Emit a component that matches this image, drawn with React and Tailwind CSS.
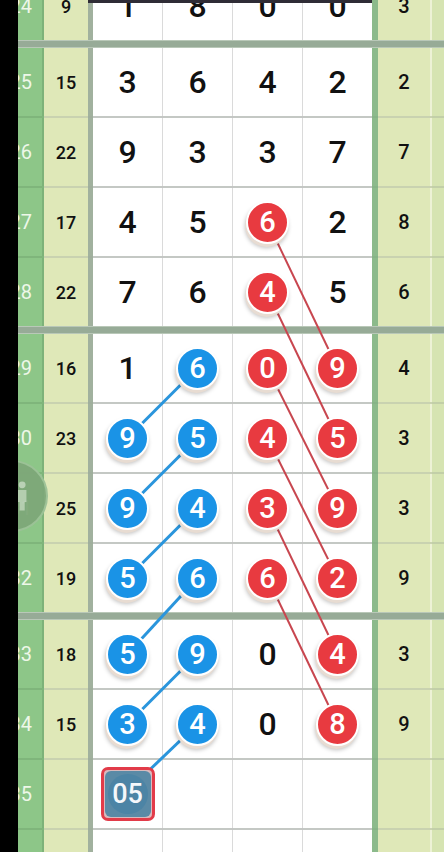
import React from 'react';

const B = (v) => ({ v, c: 'b' });
const R = (v) => ({ v, c: 'r' });

const rows = [
  { n: '24', s: '9', d: ['1', '8', '0', '0'], r: '3', last: true },
  { n: '25', s: '15', d: ['3', '6', '4', '2'], r: '2' },
  { n: '26', s: '22', d: ['9', '3', '3', '7'], r: '7' },
  { n: '27', s: '17', d: ['4', '5', R('6'), '2'], r: '8' },
  { n: '28', s: '22', d: ['7', '6', R('4'), '5'], r: '6', last: true },
  { n: '29', s: '16', d: ['1', B('6'), R('0'), R('9')], r: '4' },
  { n: '30', s: '23', d: [B('9'), B('5'), R('4'), R('5')], r: '3' },
  { n: '31', s: '25', d: [B('9'), B('4'), R('3'), R('9')], r: '3' },
  { n: '32', s: '19', d: [B('5'), B('6'), R('6'), R('2')], r: '9', last: true },
  { n: '33', s: '18', d: [B('5'), B('9'), '0', R('4')], r: '3' },
  { n: '34', s: '15', d: [B('3'), B('4'), '0', R('8')], r: '9' },
  { n: '35', s: '', d: [{ v: '05', c: 'x' }, '', '', ''], r: '' },
  { n: '36', s: '', d: ['', '', '', ''], r: '', last: true },
];

const centers = [];
{
  let y = -28;
  rows.forEach((row) => {
    centers.push(y + 34);
    y += row.last ? 76 : 70;
  });
}
const colX = [127.5, 197.5, 267.5, 337.5];

const redLines = [];
const blueLines = [];
for (let r = 3; r <= 8; r++) redLines.push([colX[2], centers[r], colX[3], centers[r + 2]]);
for (let r = 5; r <= 9; r++) blueLines.push([colX[1], centers[r], colX[0], centers[r + 1]]);

const font = { fontFamily: 'Roboto, "Liberation Sans", sans-serif' };

function Ball({ v, c }) {
  if (c === 'x') {
    return (
      <div className="relative z-10 w-[54px] h-[54px] rounded-[7px] border-[3px] border-[#e23b49] bg-[#d9b9bd] flex items-center justify-center">
        <div className="w-[46px] h-[46px] rounded-[6px] bg-[#5a8aa6] flex items-center justify-center">
          <div className="w-[40px] h-[40px] rounded-full bg-[#4c84a5] flex items-center justify-center text-[#f4f7fa] text-[27px] leading-none">
            {v}
          </div>
        </div>
      </div>
    );
  }
  const bg = c === 'b' ? 'bg-[#1a93e6]' : 'bg-[#e83a40]';
  return (
    <div
      className={`relative z-10 w-[43px] h-[43px] rounded-full ${bg} border-[2.5px] border-white flex items-center justify-center text-white text-[29px] leading-none shadow-[-1px_3px_0_#e8dcd2,-1px_4px_4px_rgba(0,0,0,0.25)]`}
    >
      {v}
    </div>
  );
}

function Row({ row }) {
  const h = row.last ? 'h-[68px]' : 'h-[70px] border-b-2';
  return (
    <>
      <div className="flex">
        <div className={`w-[24px] ${h} border-[#7fb57b] bg-[#8dc688] flex items-center justify-end pr-[10px] overflow-hidden whitespace-nowrap text-[20px] text-[#eef7e8]`}>
          {row.n}
        </div>
        <div className={`w-[2px] ${h} border-[#7fb57b] bg-[#7db279]`} />
        <div className={`w-[44px] ${h} border-[#c9d2b0] bg-[#dfe8b8] flex items-center justify-center text-[18px] font-medium text-[#111]`}>
          {row.s}
        </div>
        <div className={`w-[5px] ${h} border-[#9fae9c] bg-[#a1b19e]`} />
        {row.d.map((cell, i) => (
          <React.Fragment key={i}>
            {i > 0 && <div className={`w-[1px] ${h} border-[#c4c4c4] bg-[#dadada]`} />}
            <div className={`w-[69px] ${h} border-[#c4c8c4] bg-white flex items-center justify-center text-[32px] font-medium text-[#111] leading-none`}>
              {typeof cell === 'string' ? cell : <Ball {...cell} />}
            </div>
          </React.Fragment>
        ))}
        <div className={`w-[6px] ${h} border-[#86b486] bg-[#8cba8b]`} />
        <div className={`w-[52px] ${h} border-[#c9d2b0] bg-[#dfe8b8] flex items-center justify-center text-[20px] font-medium text-[#111]`}>
          {row.r}
        </div>
        <div className={`w-[2px] ${h} border-[#c9d2b0] bg-[#edf2d6]`} />
        <div className={`w-[12px] ${h} border-[#c2cfa8] bg-[#d6e4b2]`} />
      </div>
      {row.last && (
        <div className="h-[8px] flex flex-col">
          <div className="h-[1px] bg-[#b9c8b8]" />
          <div className="h-[6px] bg-[#97ab97]" />
          <div className="h-[1px] bg-[#b9c8b8]" />
        </div>
      )}
    </>
  );
}

export default function App() {
  return (
    <div className="relative w-[444px] h-[852px] overflow-hidden bg-white flex" style={font}>
      <div className="relative z-20 w-[18px] h-full bg-black shrink-0" />
      <div className="flex flex-col mt-[-28px] w-[426px] shrink-0">
        {rows.map((row, i) => (
          <Row key={i} row={row} />
        ))}
      </div>

      <svg className="absolute left-0 top-0 z-[5] pointer-events-none" width="444" height="852">
        {blueLines.map(([x1, y1, x2, y2], i) => (
          <line key={'b' + i} x1={x1} y1={y1} x2={x2} y2={y2} stroke="#2a95dc" strokeWidth="3" />
        ))}
        {redLines.map(([x1, y1, x2, y2], i) => (
          <line key={'r' + i} x1={x1} y1={y1} x2={x2} y2={y2} stroke="#c8464f" strokeWidth="2" />
        ))}
        <line x1={colX[1]} y1={centers[10]} x2={colX[0] + 22} y2={centers[11] - 24} stroke="#2a95dc" strokeWidth="3" />
      </svg>

      <div className="absolute z-10 left-[-24px] top-[460px] w-[72px] h-[72px] rounded-full bg-[#7ea879] border-2 border-[#9cc297] opacity-95 flex items-center justify-end pr-[17px]">
        <svg width="12" height="34" viewBox="0 0 14 36">
          <circle cx="6" cy="5" r="4" fill="#e6efe2" opacity="0.6" />
          <path d="M1 11 h10 v14 h-2 v10 h-6 v-10 h-2 z" fill="#e6efe2" opacity="0.55" />
        </svg>
      </div>

      <div className="absolute z-20 left-[88px] top-0 w-[284px] h-[3px] bg-[#2f2c36]" />
    </div>
  );
}
